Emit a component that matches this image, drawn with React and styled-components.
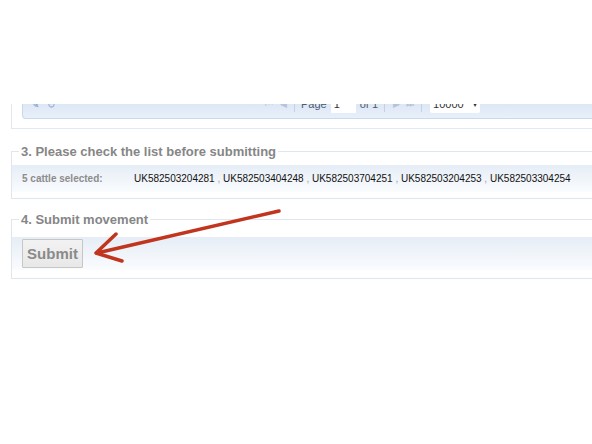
import React from 'react'
import styled, { createGlobalStyle } from 'styled-components'

let cattle = [
    `UK582503204281`,
    `UK582503404248`,
    `UK582503704251`,
    `UK582503204253`,
    `UK582503304254`,
]

const GlobalStyle = createGlobalStyle`
html, body {
    margin: 0;
    padding: 0;
    background: #ffffff;
    overflow: hidden;
}
body {
    font-family: "Liberation Sans", Arial, sans-serif;
}`

let Arrow = () => (
    <ArrowSvg width="592" height="444" viewBox="0 0 592 444">
        <g stroke="#c1341d" strokeWidth="3.5" strokeLinecap="round" strokeLinejoin="round" fill="none">
            <path d="M279 211 L97 253" />
            <path d="M116 234 L96 253 L122 261" />
        </g>
    </ArrowSvg>
)

let main = () => {
    return (
        <Page>
            <GlobalStyle />
            <GridPanel>
                <Toolbar>
                    <ToolRow>
                        <ToolIcon color="#6b8fc0">✎</ToolIcon>
                        <ToolIcon color="#8aa6cc">↻</ToolIcon>
                        <Pager>
                            <Faded>⏮</Faded>
                            <Faded>◀</Faded>
                            <Sep />
                            <PagerText>Page</PagerText>
                            <PageInput>1</PageInput>
                            <PagerText>of 1</PagerText>
                            <Sep />
                            <Faded>▶</Faded>
                            <Faded>⏭</Faded>
                            <Sep />
                            <SizeSelect>10000 <small>▾</small></SizeSelect>
                        </Pager>
                    </ToolRow>
                </Toolbar>
            </GridPanel>

            <Section top={15}>
                <Legend>3. Please check the list before submitting</Legend>
                <Band height={27}>
                    <Label>5 cattle selected:</Label>
                    <Ids>
                        {
                            cattle.map((tag, index) => (
                                <React.Fragment key={tag}>
                                    {index > 0 && <Comma> , </Comma>}
                                    {tag}
                                </React.Fragment>
                            ))
                        }
                    </Ids>
                </Band>
            </Section>

            <Section top={13} padTop={10} padBottom={8}>
                <Legend>4. Submit movement</Legend>
                <Band height={33}>
                    <SubmitButton type="button">Submit</SubmitButton>
                </Band>
            </Section>

            <Arrow />
        </Page>
    )
}

const Page = styled.div`
position: relative;
width: 100%;
height: 444px;
padding: 104px 0 0 11px;
box-sizing: border-box;
overflow: hidden;
`

const GridPanel = styled.div`
border: 1px solid #e2e8ef;
border-top: none;
border-right: none;
padding: 0 0 9px 10px;
`

const Toolbar = styled.div`
height: 14px;
overflow: hidden;
background: linear-gradient(#dde7f5, #e8f0fa);
border: 1px solid #c9d8ec;
border-top: none;
border-right: none;
border-bottom-left-radius: 4px;
`

const ToolRow = styled.div`
display: flex;
align-items: center;
height: 24px;
margin-top: -12px;
padding-left: 6px;
font-size: 11px;
white-space: nowrap;
`

const ToolIcon = styled.span`
width: 12px;
margin-right: 4px;
color: ${props => props.color};
font-size: 10px;
text-align: center;
`

const Pager = styled.div`
display: flex;
align-items: center;
margin-left: 203px;
gap: 4px;
`

const Faded = styled.span`
color: #b5c4d8;
font-size: 9px;
width: 10px;
text-align: center;
`

const Sep = styled.span`
width: 1px;
height: 16px;
margin: 0 2px;
background: #c3d1e3;
`

const PagerText = styled.span`
color: #4a5a70;
font-size: 11px;
`

const PageInput = styled.span`
display: flex;
align-items: center;
width: 22px;
height: 18px;
padding-left: 3px;
background: #ffffff;
color: #333333;
font-size: 11px;
`

const SizeSelect = styled.span`
display: flex;
align-items: center;
justify-content: space-between;
width: 44px;
height: 18px;
margin-left: 2px;
padding: 0 3px;
background: #ffffff;
border-radius: 2px;
color: #333333;
font-size: 11px;
small {
    font-size: 8px;
}
`

const Section = styled.fieldset`
margin: ${props => props.top}px 0 0 0;
padding: ${props => props.padTop || 6}px 0 ${props => props.padBottom || 6}px 0;
border: 1px solid #e0e6ed;
border-right: none;
min-width: 0;
`

const Legend = styled.legend`
margin-left: 7px;
padding: 0 2px;
font-size: 13px;
line-height: 15px;
font-weight: bold;
color: #868686;
`

const Band = styled.div`
display: flex;
align-items: center;
height: ${props => props.height}px;
padding-left: 10px;
background: linear-gradient(#e6edf6, #fafcfe);
`

const Label = styled.span`
width: 112px;
flex-shrink: 0;
font-size: 10px;
font-weight: bold;
color: #8c8c8c;
`

const Ids = styled.span`
font-size: 10px;
color: #111111;
white-space: pre;
`

const Comma = styled.span`
color: #a0a0a0;
`

const SubmitButton = styled.button`
height: 29px;
width: 61px;
padding: 0;
margin: 0;
font-family: "Liberation Sans", Arial, sans-serif;
font-size: 15px;
font-weight: bold;
color: #8a8a8a;
background: linear-gradient(#f2f2f2, #e8e8e8);
border: 1px solid #c6c6c6;
border-radius: 1px;
`

const ArrowSvg = styled.svg`
position: absolute;
left: 0;
top: 0;
pointer-events: none;
`

export default main
